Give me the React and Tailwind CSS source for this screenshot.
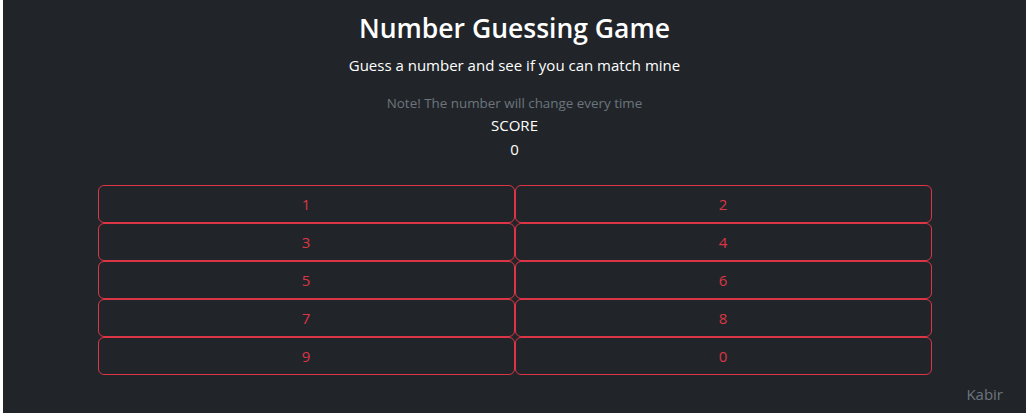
import React from 'react';

const numbers = [1, 2, 3, 4, 5, 6, 7, 8, 9, 0];

const App = () => {
    return (
        <div className="h-[416px] w-[1026px] bg-white" style={{ fontFamily: '"Open Sans", "Noto Sans", sans-serif' }}>
            <div className="ml-[3px] flex h-[413px] w-[1023px] flex-col bg-[#212529] text-white">
                <h1 className="mt-[9px] text-center text-[26.5px] font-semibold leading-[38px]">
                    Number Guessing Game
                </h1>
                <p className="mt-[6px] text-center text-[15px] leading-[24px]">
                    Guess a number and see if you can match mine
                </p>
                <p className="mt-[16px] text-center text-[13.4px] leading-[20px] text-[#6c757d]">
                    Note! The number will change every time
                </p>
                <p className="text-center text-[15px] leading-[24px]">SCORE</p>
                <p className="text-center text-[15px] leading-[24px]">0</p>

                <div className="mx-auto mt-[24px] grid w-[834px] grid-cols-2">
                    {numbers.map(n => (
                        <button
                            key={n}
                            className="h-[38px] rounded-[6px] border border-[#dc3545] text-[15px] text-[#dc3545]"
                        >
                            {n}
                        </button>
                    ))}
                </div>

                <div className="mt-[7px] flex justify-end pr-[23px]">
                    <span className="text-[15px] leading-[24px] text-[#6c757d]">Kabir</span>
                </div>
            </div>
        </div>
    );
};

export default App;
